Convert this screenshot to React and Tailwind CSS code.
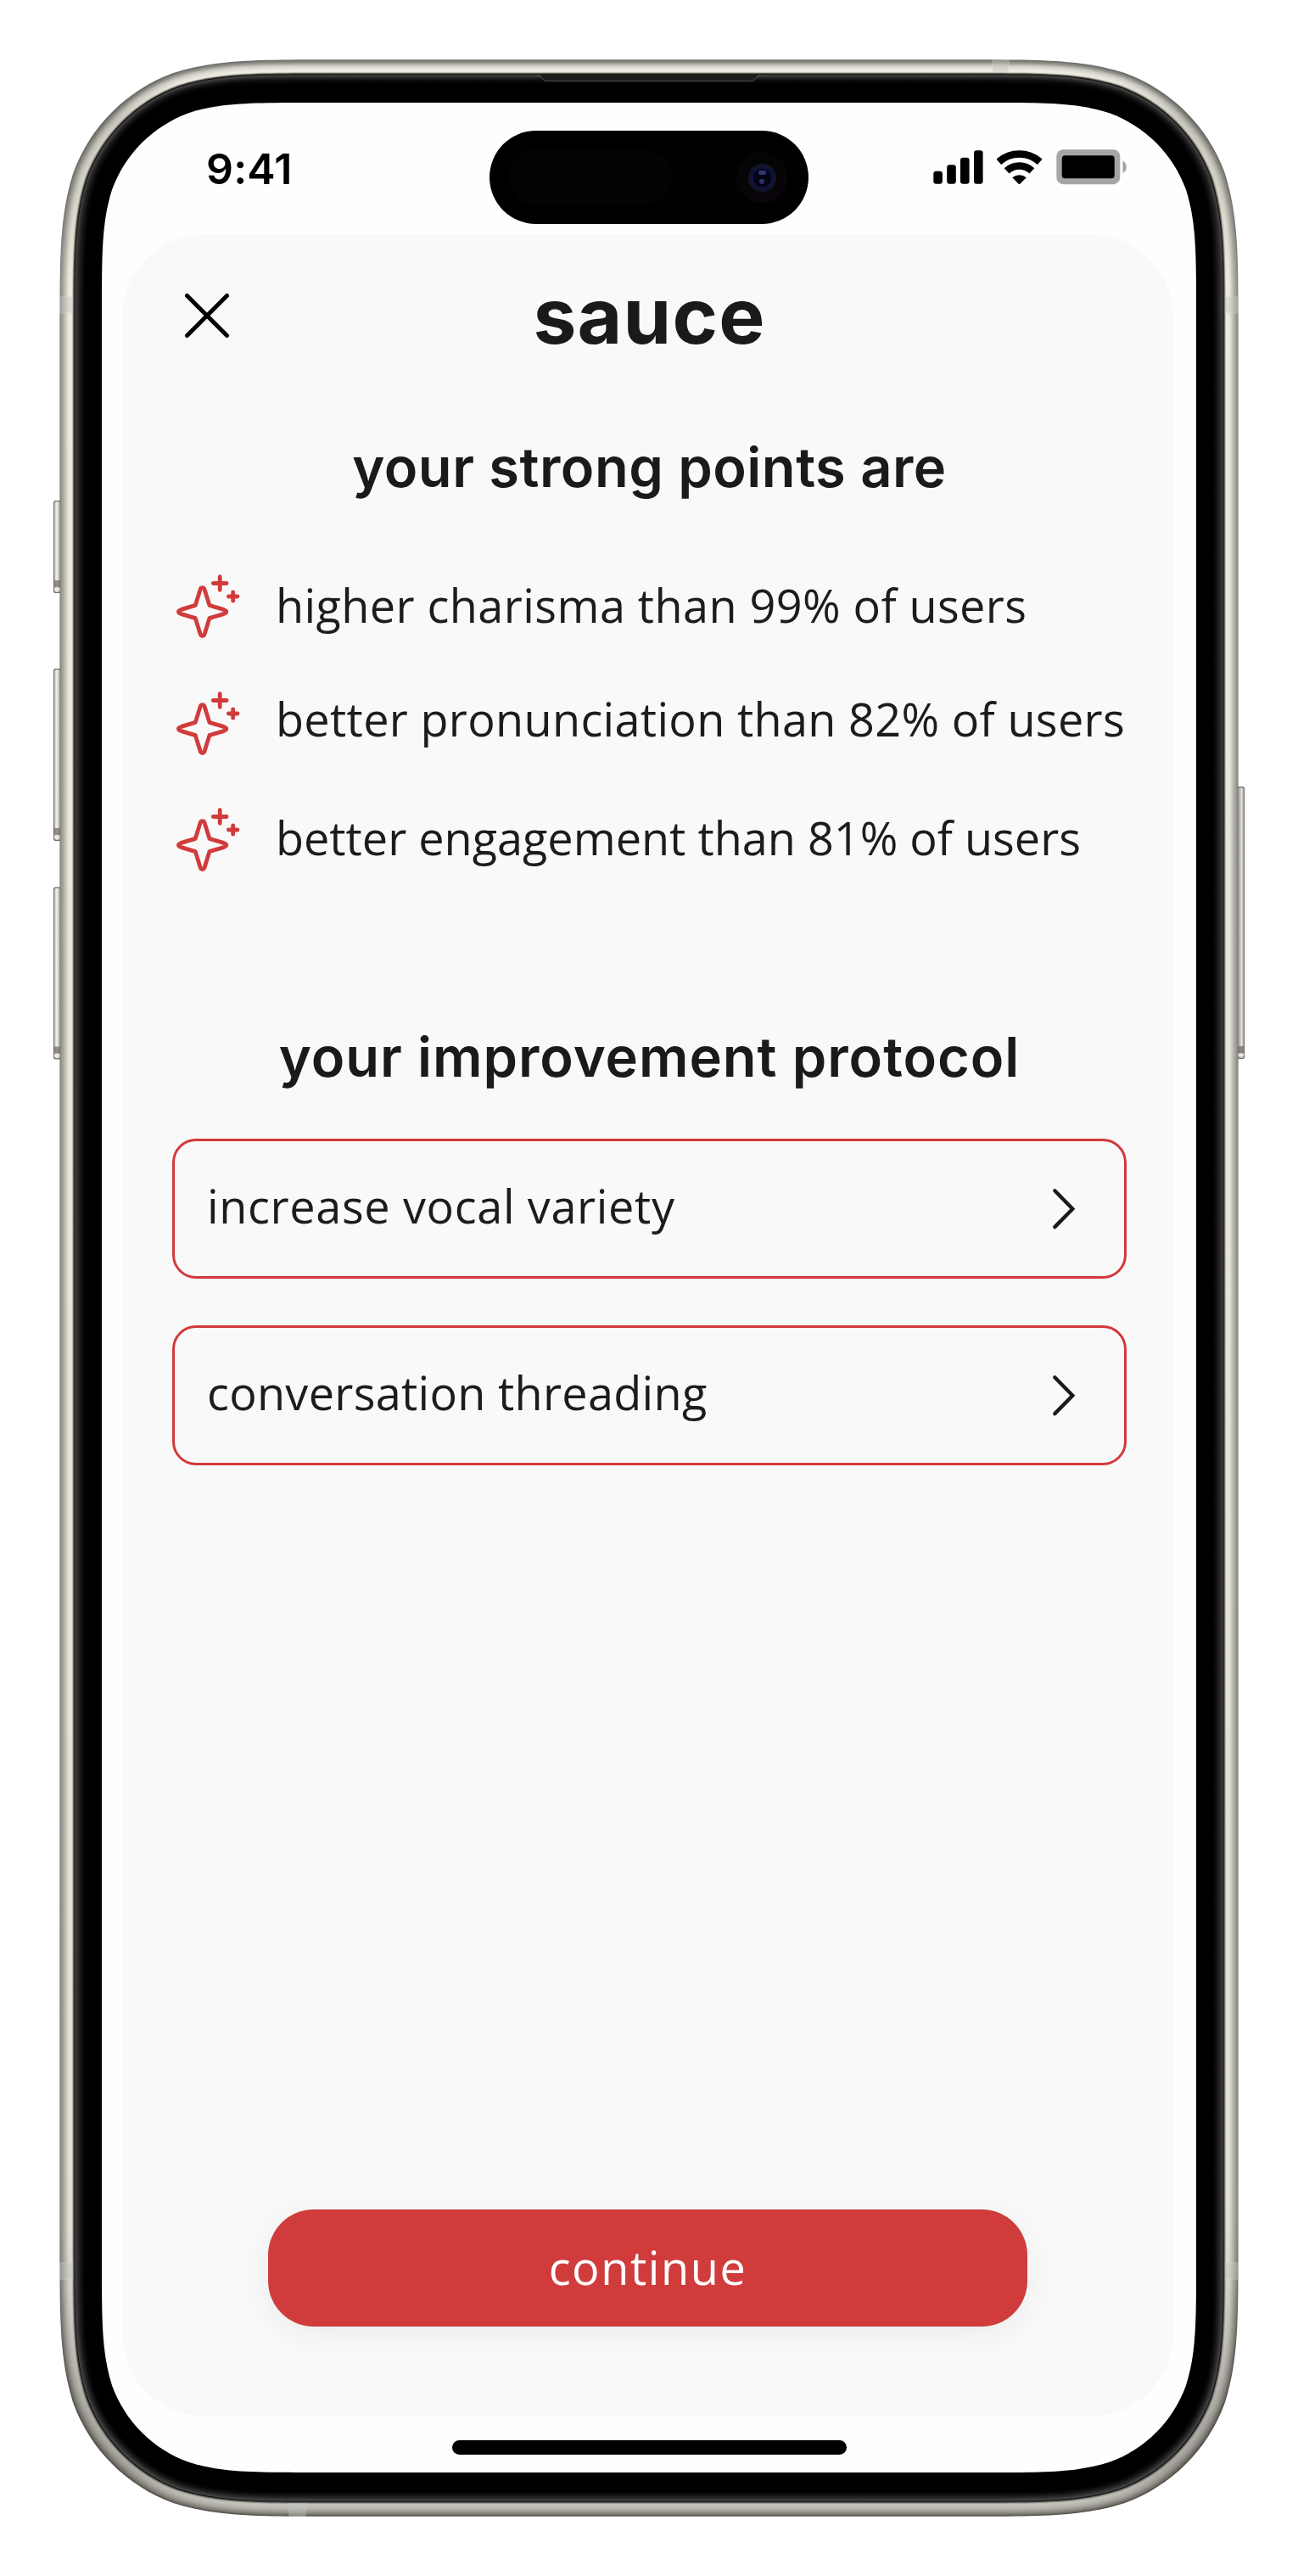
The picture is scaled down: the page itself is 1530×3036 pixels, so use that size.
import React from "react";

/* ---------- Phone body ---------- */

// Continuous-curvature rounded rectangle (smooth corners of radius r).
function smoothRect(x, y, w, h, r) {
  const a = 1.52866471 * r, b = 1.08849296 * r, c = 0.86840694 * r;
  const d = 0.63149379 * r, e = 0.07491139 * r, f = 0.37282383 * r, g = 0.16905956 * r;
  const R = x + w, B = y + h;
  return [
    `M${x + a} ${y}L${R - a} ${y}`,
    `C${R - b} ${y} ${R - c} ${y} ${R - d} ${y + e}`,
    `C${R - f} ${y + g} ${R - g} ${y + f} ${R - e} ${y + d}`,
    `C${R} ${y + c} ${R} ${y + b} ${R} ${y + a}`,
    `L${R} ${B - a}`,
    `C${R} ${B - b} ${R} ${B - c} ${R - e} ${B - d}`,
    `C${R - g} ${B - f} ${R - f} ${B - g} ${R - d} ${B - e}`,
    `C${R - c} ${B} ${R - b} ${B} ${R - a} ${B}`,
    `L${x + a} ${B}`,
    `C${x + b} ${B} ${x + c} ${B} ${x + d} ${B - e}`,
    `C${x + f} ${B - g} ${x + g} ${B - f} ${x + e} ${B - d}`,
    `C${x} ${B - c} ${x} ${B - b} ${x} ${B - a}`,
    `L${x} ${y + a}`,
    `C${x} ${y + b} ${x} ${y + c} ${x + e} ${y + d}`,
    `C${x + g} ${y + f} ${x + f} ${y + g} ${x + d} ${y + e}`,
    `C${x + c} ${y} ${x + b} ${y} ${x + a} ${y}Z`,
  ].join("");
}

// One entry per pixel inwards: [top, side, bottom]
const RINGS = [
  ["#6c6e68", "#807e77", "#56524c"],
  ["#777873", "#94928b", "#67635d"],
  ["#868681", "#9d9c95", "#7a7670"],
  ["#93938d", "#a5a49d", "#85827c"],
  ["#a09f98", "#aeada5", "#8f8d86"],
  ["#b2b1aa", "#b9b8b0", "#9a9891"],
  ["#c3c2ba", "#c2c1b9", "#a4a29b"],
  ["#cfcdc5", "#ccc9c1", "#acaba4"],
  ["#d8d6cd", "#d8d6cd", "#b3b2ab"],
  ["#dfddd4", "#e1dfd6", "#b9b8b1"],
  ["#e6e3da", "#e8e5db", "#bebdb6"],
  ["#ebe9df", "#ece9df", "#c2c1ba"],
  ["#f0ede3", "#eeebe1", "#c6c5be"],
  ["#f3f0e6", "#eeebe0", "#c8c7c1"],
  ["#efece1", "#e6e2d7", "#c3c2bc"],
  ["#b5b1a6", "#a8a296", "#96948e"],
  ["#454541", "#4c4a45", "#4e4c48"],
  ["#0f0f0f", "#141413", "#0e0e0d"],
  ["#434343", "#424242", "#454545"],
  ["#3a3a3a", "#373737", "#3c3c3c"],
  ["#2c2c2c", "#303030", "#343434"],
  ["#242424", "#292929", "#2b2b2b"],
  ["#1b1b1b", "#232323", "#232323"],
  ["#141414", "#1d1d1d", "#1c1c1c"],
  ["#0e0e0e", "#181818", "#151515"],
  ["#090909", "#131313", "#0f0f0f"],
  ["#060606", "#0e0e0e", "#0a0a0a"],
  ["#030303", "#0a0a0a", "#060606"],
  ["#010101", "#060606", "#030303"],
  ["#000000", "#030303", "#000000"],
  ["#000000", "#000000", "#000000"],
];

const METAL_RINGS = 16;

// Antenna bands: x, y, width, height
const BANDS = [
  [1170, 70.3, 19, 16.5],
  [341, 2949, 19, 16.5],
  [70.6, 350, 16.5, 19],
  [1442.8, 350, 16.5, 19],
  [70.6, 2667, 16.5, 19],
  [1442.8, 2667, 16.5, 19],
];

function ringPath(i) {
  return smoothRect(70.4 + i, 70.2 + i, 1389.2 - 2 * i, 2895.6 - 2 * i, 212 - i);
}

function SideKey({ x, y, h, side }) {
  return (
    <g>
      <rect x={x} y={y} width="10" height={h} rx="2.5" fill="#6f6d67" />
      <rect x={x + 1} y={y + 1.2} width="8" height={h - 2.4} rx="2" fill={`url(#key-${side})`} />
      <rect x={x + 1} y={y + h - 15} width="8" height="8" fill="#6d675f" opacity="0.7" />
      <rect x={x + 1} y={y + h - 6} width="8" height="3" fill="#e9e6df" />
    </g>
  );
}

function PhoneBody() {
  return (
    <svg className="absolute inset-0" width="1530" height="3036" viewBox="0 0 1530 3036" aria-hidden="true">
      <defs>
        {RINGS.map(([top, side, bottom], i) => (
          <linearGradient key={i} id={`ring-${i}`} gradientUnits="userSpaceOnUse" x1="0" y1="70" x2="0" y2="2966">
            <stop offset="0" stopColor={top} />
            <stop offset="0.01" stopColor={top} />
            <stop offset="0.08" stopColor={side} />
            <stop offset="0.88" stopColor={side} />
            <stop offset="0.96" stopColor={bottom} />
            <stop offset="1" stopColor={bottom} />
          </linearGradient>
        ))}
        <linearGradient id="corner-shade" gradientUnits="userSpaceOnUse" x1="0" y1="70" x2="0" y2="2966">
          <stop offset="0.003" stopColor="#3a3731" stopOpacity="0" />
          <stop offset="0.025" stopColor="#3a3731" stopOpacity="0.2" />
          <stop offset="0.055" stopColor="#3a3731" stopOpacity="0.14" />
          <stop offset="0.09" stopColor="#3a3731" stopOpacity="0" />
          <stop offset="0.9" stopColor="#3a3731" stopOpacity="0.06" />
          <stop offset="0.95" stopColor="#3a3731" stopOpacity="0.18" />
          <stop offset="0.98" stopColor="#3a3731" stopOpacity="0.22" />
          <stop offset="0.998" stopColor="#3a3731" stopOpacity="0" />
        </linearGradient>
        <linearGradient id="key-left">
          <stop offset="0" stopColor="#b5b3ad" />
          <stop offset="0.3" stopColor="#f0efeb" />
          <stop offset="0.6" stopColor="#d6d4ce" />
          <stop offset="1" stopColor="#8d8b85" />
        </linearGradient>
        <linearGradient id="key-right">
          <stop offset="0" stopColor="#8d8b85" />
          <stop offset="0.3" stopColor="#a9a7a1" />
          <stop offset="0.7" stopColor="#e3e1dc" />
          <stop offset="1" stopColor="#a5a29c" />
        </linearGradient>
      </defs>

      <SideKey x={63} y={590} h={109} side="left" />
      <SideKey x={63} y={788} h={203} side="left" />
      <SideKey x={63} y={1045.5} h={203} side="left" />
      <SideKey x={1457} y={927} h={321} side="right" />

      {RINGS.slice(0, METAL_RINGS).map((_, i) => (
        <path key={i} d={ringPath(i)} fill={`url(#ring-${i})`} />
      ))}
      <path d={ringPath(0)} fill="url(#corner-shade)" />
      {BANDS.map(([x, y, w, h]) => (
        <rect key={`${x}-${y}`} x={x} y={y} width={w} height={h} fill="#c4c3bd" stroke="#dddcd7" opacity="0.42" />
      ))}
      {RINGS.slice(METAL_RINGS).map((_, i) => (
        <path key={i} d={ringPath(i + METAL_RINGS)} fill={`url(#ring-${i + METAL_RINGS})`} />
      ))}

      <path d="M636 88H894L889 94.5Q888 95.5 886 95.5H644Q642 95.5 641 94.5Z" fill="#1d1d1d" />
      <path d="M633 88.6Q637 88.6 638 90.5L640.5 94Q641.5 95.5 644 95.5H886Q888.500 95.5 889.500 94L892 90.500Q893 88.600 897 88.600" fill="none" stroke="#4f4f4f" />

      <path d={smoothRect(120, 121, 1290, 2793, 162)} fill="#fffdfe" />
    </svg>
  );
}

/* ---------- Icons ---------- */

function Sparkles() {
  return (
    <svg
      className="h-[80px] w-[80px] shrink-0"
      viewBox="0 0 80 80"
      fill="none"
      stroke="#d13b3c"
      strokeWidth="4.8"
      strokeLinecap="round"
      strokeLinejoin="round"
    >
      <path d="M31 20C31.900 16.800 35.300 16.800 36.200 20L41.900 38.400L58.500 43.400C62.900 44.900 62.900 47.100 58.500 48.600L41.900 53.600L36.200 72C35.300 75.400 31.900 75.400 31 72L25.300 53.600L8.700 48.600C4.300 47.100 4.300 44.900 8.700 43.400L25.300 38.400Z" />
      <path d="M54.200 4.700V20.300M46.300 12.500H62.100" />
      <path d="M69.700 22.800V33.200M64.400 28H75" />
    </svg>
  );
}

function CloseIcon() {
  return (
    <svg className="h-[60px] w-[60px]" viewBox="0 0 60 60" stroke="#000" strokeWidth="5" strokeLinecap="round">
      <path d="M6.500 6.500L53.500 53.500M53.500 6.500L6.500 53.500" />
    </svg>
  );
}

function ChevronRight() {
  return (
    <svg
      className="h-[52px] w-[32px]"
      viewBox="0 0 32 52"
      fill="none"
      stroke="#1a1a1a"
      strokeWidth="4.4"
      strokeLinecap="round"
      strokeLinejoin="miter"
    >
      <path d="M5.300 4.300L26.300 25.700L5.300 47.100" />
    </svg>
  );
}

function SignalIcon() {
  return (
    <svg width="59" height="40" viewBox="0 0 59 40" fill="#000">
      <rect x="0.300" y="24.700" width="10.600" height="15" rx="3.200" />
      <rect x="16.200" y="17.300" width="10.600" height="22.400" rx="3.200" />
      <rect x="32" y="8.700" width="10.600" height="31" rx="3.200" />
      <rect x="48" y="0.300" width="10.600" height="39.400" rx="3.200" />
    </svg>
  );
}

function WifiIcon() {
  return (
    <svg width="53" height="41" viewBox="0 0 53 41" fill="none" stroke="#000" strokeWidth="8.600">
      <path d="M2.300 13.800A36 36 0 0 1 50.700 13.800" />
      <path d="M11.600 24.400A21.800 21.800 0 0 1 41.400 24.400" />
      <path d="M18.300 32.200A12.700 12.700 0 0 1 34.700 32.200L27.300 39.700Q26.500 40.500 25.700 39.700Z" fill="#000" stroke="none" />
    </svg>
  );
}

function BatteryIcon() {
  return (
    <svg width="83" height="42" viewBox="0 0 83 42">
      <rect x="0.300" y="0.200" width="75" height="41" rx="8" fill="#a6a4a5" />
      <rect x="6.700" y="7.200" width="62" height="27" rx="3.500" fill="#000" />
      <path d="M78.500 13.500Q82.700 15.500 82.700 20.700Q82.700 26 78.500 28Z" fill="#a6a4a5" />
    </svg>
  );
}

/* ---------- Screen ---------- */

function DynamicIsland() {
  return (
    <div className="flex h-[110px] w-[376px] items-center justify-between rounded-full bg-black pr-[25px] pl-[22px]">
      <div className="h-[66px] w-[194px] rounded-full bg-[#030303]" />
      <div className="flex size-[60px] items-center justify-center rounded-full bg-linear-to-b from-[#040404] to-[#0a050b]">
        <div className="flex size-[33px] items-center justify-center rounded-full bg-[#12152a]">
          <div className="flex size-[25px] flex-col items-center justify-center gap-[5px] rounded-full border-2 border-[#0e1040] bg-[#030314]">
            <div className="h-[5px] w-[9px] rounded-full bg-[#343873]" />
            <div className="size-[6px] rounded-full bg-linear-to-b from-[#0c474f] to-[#3b1270]" />
          </div>
        </div>
      </div>
    </div>
  );
}

function StatusBar() {
  return (
    <div className="flex h-[155px] shrink-0 items-start">
      <div className="mt-[48px] ml-[123px] w-[334px] font-[Inter,sans-serif] text-[50px] leading-[60px] font-semibold tracking-[0.200px] text-black">
        9:41
      </div>
      <div className="mt-[33px]">
        <DynamicIsland />
      </div>
      <div className="mt-[55px] ml-[147px] flex items-center">
        <SignalIcon />
        <div className="ml-[16px]">
          <WifiIcon />
        </div>
        <div className="ml-[16.500px]">
          <BatteryIcon />
        </div>
      </div>
    </div>
  );
}

function StrongPoint({ children, className }) {
  return (
    <li className="flex h-[80px] items-center gap-[40px] pl-[2px] whitespace-nowrap">
      <Sparkles />
      <span className={className}>{children}</span>
    </li>
  );
}

function ProtocolButton({ children, className }) {
  return (
    <button
      type="button"
      className="flex h-[165px] w-full items-center justify-between rounded-[28px] border-[3px] border-[#d3393b] pr-[55px] pl-[38px]"
    >
      <span className={className}>{children}</span>
      <ChevronRight />
    </button>
  );
}

export default function App() {
  return (
    <div className="relative h-[3036px] w-[1530px] overflow-hidden bg-white font-['Open_Sans',sans-serif] text-[54px] leading-[72px] text-[#1c1c1c]">
      <PhoneBody />
      <main className="relative mx-auto flex h-[2914px] w-[1290px] flex-col pt-[121px]">
        <StatusBar />

        <section className="ml-[24px] flex h-[2572px] w-[1238.500px] shrink-0 flex-col rounded-[98px] bg-[#f9f9f9] pr-[54.500px] pb-[106px] pl-[59px]">
          <header className="grid h-[192px] shrink-0 grid-cols-[60px_1fr_60px] items-center">
            <button type="button" aria-label="close" className="ml-[11px]">
              <CloseIcon />
            </button>
            <h1 className="text-center font-[Inter,sans-serif] text-[91px] leading-[100px] font-bold tracking-[1.200px] text-[#1a1a1a]">
              sauce
            </h1>
          </header>

          <h2 className="mt-[43px] mb-[1px] text-center font-[Inter,sans-serif] text-[65px] leading-[80px] font-semibold tracking-[0.500px] whitespace-nowrap text-[#1a1a1a]">
            your strong points are
          </h2>

          <ul className="mt-[83px] flex flex-col gap-[57.500px]">
            <StrongPoint className="mb-[5px] tracking-[0.420px]">higher charisma than 99% of users</StrongPoint>
            <StrongPoint className="mb-[12px] tracking-[0.320px]">better pronunciation than 82% of users</StrongPoint>
            <StrongPoint className="mb-[6px] tracking-[0px]">better engagement than 81% of users</StrongPoint>
          </ul>

          <h2 className="mt-[176px] mb-[1px] text-center font-[Inter,sans-serif] text-[65px] leading-[80px] font-semibold tracking-[0.950px] whitespace-nowrap text-[#1a1a1a]">
            your improvement protocol
          </h2>

          <div className="mt-[55px] flex flex-col gap-[55px]">
            <ProtocolButton className="mb-[7px] tracking-[0.650px]">increase vocal variety</ProtocolButton>
            <ProtocolButton className="mb-[7px] tracking-[0.300px]">conversation threading</ProtocolButton>
          </div>

          <button
            type="button"
            className="mt-auto ml-[113px] h-[138px] w-[895px] shrink-0 rounded-[54px] bg-[#d03c3c] pb-[3px] tracking-[1.600px] text-white shadow-[0_8px_36px_rgba(0,0,0,0.06)]"
          >
            continue
          </button>
        </section>

        <div className="mx-auto mt-[28px] h-[17px] w-[465px] shrink-0 rounded-full bg-black" />
      </main>
    </div>
  );
}
